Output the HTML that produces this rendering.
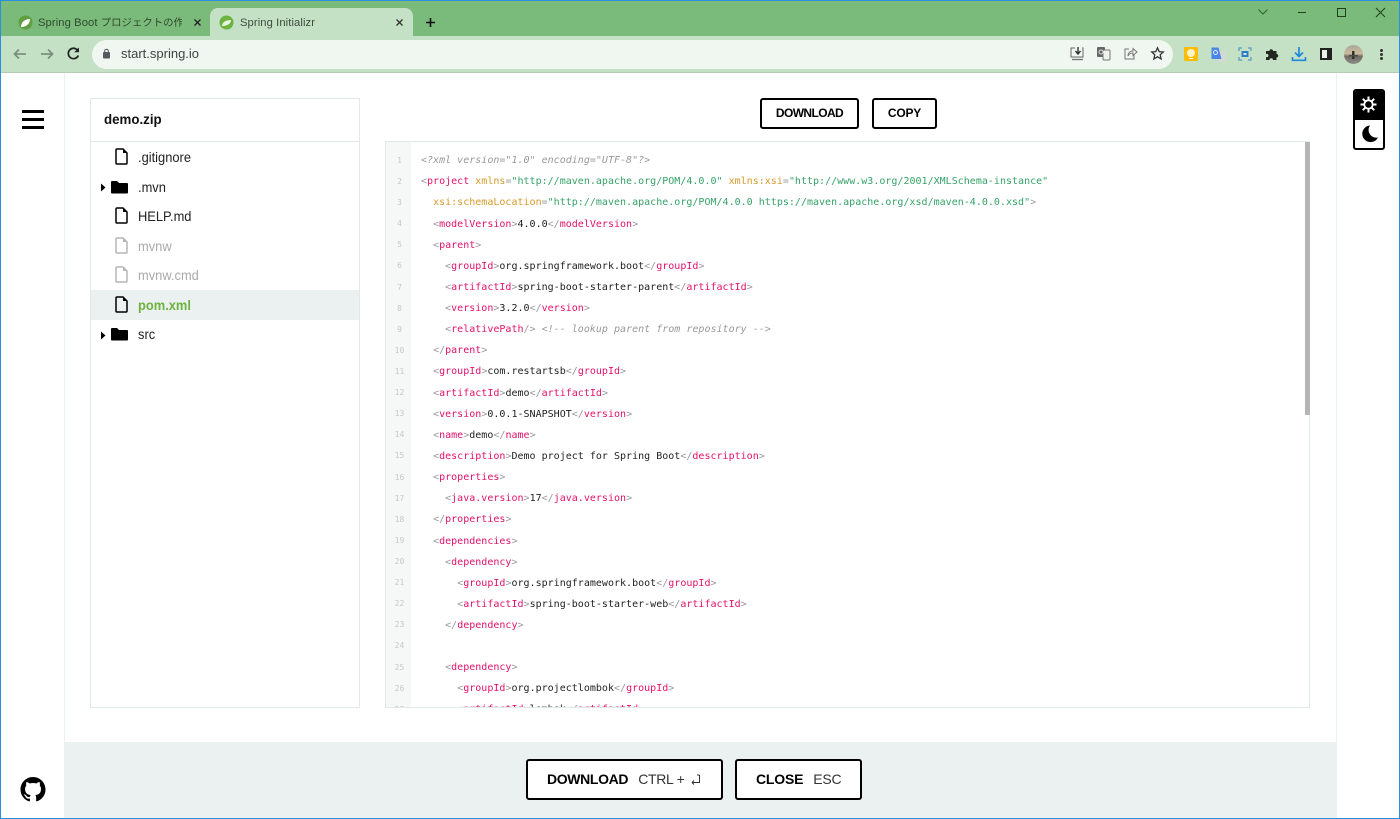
<!DOCTYPE html>
<html><head><meta charset="utf-8">
<style>
*{box-sizing:border-box}
html,body{margin:0;padding:0;width:1400px;height:819px;overflow:hidden;background:#fff;font-family:"Liberation Sans","Noto Sans CJK JP",sans-serif;color:#000}
.a{position:absolute}
#frame{position:absolute;left:0;top:0;width:1400px;height:819px;border:1px solid #2a8fdc;pointer-events:none;z-index:9}
.tt{position:absolute;font-size:12px;color:#3c4a3c;white-space:nowrap;line-height:16px}
.file{position:absolute;left:138px;font-size:14px;line-height:16px;color:#222;white-space:nowrap;transform:scaleX(.92);transform-origin:0 50%}
.btn{position:absolute;border:2px solid #000;border-radius:3px;background:#fff;font-weight:700;text-align:center;white-space:nowrap}
.ln{position:absolute;left:386px;width:25px;text-align:center;font:8px/12px "DejaVu Sans Mono",monospace;color:#c4c9c9}
.c{position:absolute;left:420px;margin-top:1px;font:10px/14px "DejaVu Sans Mono",monospace;color:#222;white-space:pre;letter-spacing:.01px}
.t{color:#e3116c}.p{color:#999}.an{color:#d49a2a}.v{color:#36a269}.cm{color:#999;font-style:italic}
</style></head><body>
<div id="frame"></div>

<!-- browser chrome -->
<div class="a" style="left:0;top:0;width:1400px;height:36px;background:#7aba7a"></div>
<div class="a" style="left:0;top:36px;width:1400px;height:37px;background:#c5e1c5;border-bottom:1px solid #b5ccb5"></div>
<div class="a" style="left:210px;top:8px;width:203px;height:29px;background:#c5e1c5;border-radius:8px 8px 0 0"></div>
<svg class="a" style="left:18px;top:15px" width="15" height="15" viewBox="0 0 15 15"><circle cx="7.5" cy="7.5" r="7" fill="#5f9f3f"/><path d="M3 12C3 7 7 4 12 4C12 9 8 12 3 12Z" fill="#fff"/></svg>
<svg class="a" style="left:219px;top:15px" width="15" height="15" viewBox="0 0 15 15"><circle cx="7.5" cy="7.5" r="7" fill="#6db33f"/><path d="M3 11C3 7 7 5 12 5C12 9 8 11 3 11Z" fill="#e8f3e0"/></svg>
<div class="tt" style="left:38px;top:15px;width:144px;overflow:hidden;font-size:11.2px;letter-spacing:.1px;color:#2f4a2f">Spring Boot <span style="font-size:10.4px;letter-spacing:0">プロジェクトの作成</span></div>
<div class="tt" style="left:240px;top:15px;font-size:11.2px;letter-spacing:.1px">Spring Initializr</div>
<svg class="a" style="left:193px;top:18px" width="9" height="9" viewBox="0 0 9 9"><path d="M1.5 1.5L7.5 7.5M7.5 1.5L1.5 7.5" stroke="#222" stroke-width="1.3"/></svg>
<svg class="a" style="left:395px;top:18px" width="9" height="9" viewBox="0 0 9 9"><path d="M1.5 1.5L7.5 7.5M7.5 1.5L1.5 7.5" stroke="#333" stroke-width="1.3"/></svg>
<svg class="a" style="left:425px;top:17px" width="11" height="11" viewBox="0 0 11 11"><path d="M5.5 1V10M1 5.5H10" stroke="#111" stroke-width="1.6"/></svg>

<svg class="a" style="left:1257px;top:7px" width="12" height="10" viewBox="0 0 12 10"><path d="M1.5 2.5L6 7L10.5 2.5" stroke="#2f5f2f" fill="none"/></svg>
<div class="a" style="left:1298px;top:12px;width:8px;height:1px;background:#1f3f1f"></div>
<div class="a" style="left:1337px;top:8px;width:9px;height:9px;border:1px solid #1f3f1f"></div>
<svg class="a" style="left:1375px;top:7px" width="11" height="11" viewBox="0 0 11 11"><path d="M1 1L10 10M10 1L1 10" stroke="#1f3f1f"/></svg>

<svg class="a" style="left:12px;top:46px" width="16" height="16" viewBox="0 0 16 16"><path d="M14 8H2.5M7 3.5L2.5 8L7 12.5" stroke="#7d8d7d" stroke-width="1.7" fill="none"/></svg>
<svg class="a" style="left:39px;top:46px" width="16" height="16" viewBox="0 0 16 16"><path d="M2 8H13.5M9 3.5L13.5 8L9 12.5" stroke="#7d8d7d" stroke-width="1.7" fill="none"/></svg>
<svg class="a" style="left:66px;top:46px" width="15" height="15" viewBox="0 0 15 15"><path d="M12.3 9.5A5.2 5.2 0 1 1 11.3 3.9" stroke="#222" stroke-width="1.7" fill="none"/><path d="M13 1.5V6.3H8.2Z" fill="#222"/></svg>

<div class="a" style="left:92px;top:40px;width:1081px;height:29px;border-radius:15px;background:#f0f6f0"></div>
<svg class="a" style="left:102px;top:48px" width="9" height="11" viewBox="0 0 9 11"><rect x="1" y="4" width="7" height="6.5" rx="1" fill="#555a60"/><path d="M2.7 4.5V3A1.8 1.8 0 0 1 6.3 3V4.5" stroke="#555a60" fill="none"/></svg>
<div class="a" style="left:121px;top:46px;font-size:13px;line-height:16px;color:#3d443f">start.spring.io</div>

<svg class="a" style="left:1069px;top:46px" width="16" height="16" viewBox="0 0 16 16"><path d="M6 2H2V11H14V2H13" stroke="#666" stroke-width="1" fill="none"/><path d="M9 1V7M6.5 5L9 8L11.5 5" stroke="#333" stroke-width="1.4" fill="none"/><path d="M3 13.5H14" stroke="#777" stroke-width="1.4"/></svg>
<svg class="a" style="left:1096px;top:46px" width="15" height="15" viewBox="0 0 15 15"><rect x="1" y="1" width="8" height="10" rx="1" fill="#666"/><rect x="7" y="4" width="7" height="10" rx="1" fill="#eef3ee" stroke="#777"/><circle cx="5" cy="6" r="2" fill="none" stroke="#ddd"/></svg>
<svg class="a" style="left:1123px;top:46px" width="15" height="15" viewBox="0 0 15 15"><path d="M6 3H2V13H11V9" stroke="#777" fill="none"/><path d="M5 10C5 6 8 5 10 5V2.5L14 6L10 9.5V7C8 7 6 8 5 10Z" stroke="#777" fill="none"/></svg>
<svg class="a" style="left:1150px;top:46px" width="15" height="15" viewBox="0 0 15 15"><path d="M7.5 1.8L9.2 5.6L13.3 6L10.2 8.8L11.1 12.9L7.5 10.8L3.9 12.9L4.8 8.8L1.7 6L5.8 5.6Z" fill="none" stroke="#333" stroke-width="1.3"/></svg>

<div class="a" style="left:1184px;top:47px;width:14px;height:14px;background:#fbbc04;border-radius:1px"></div>
<div class="a" style="left:1187px;top:49px;width:8px;height:8px;background:#fff3c8;border-radius:50%"></div>
<div class="a" style="left:1189px;top:58px;width:4px;height:1px;background:#fff"></div>
<svg class="a" style="left:1210px;top:46px" width="16" height="16" viewBox="0 0 16 16"><rect x="6" y="5" width="9.5" height="11" fill="#d5d8d5"/><path d="M1.5 1.5H8.5L11.5 13H1.5Z" fill="#4a86e8"/><circle cx="5.5" cy="6.5" r="2" fill="none" stroke="#dfe9fb"/></svg>
<svg class="a" style="left:1238px;top:47px" width="14" height="14" viewBox="0 0 14 14"><path d="M1 4V1H4M10 1H13V4M13 10V13H10M4 13H1V10" stroke="#5a9bc4" stroke-width="1.3" fill="none"/><rect x="3.5" y="4" width="7" height="6" fill="#2f7fc0"/><rect x="5.5" y="6" width="3" height="2" fill="#cfe5f5"/></svg>
<svg class="a" style="left:1265px;top:47px" width="14" height="14" viewBox="0 0 14 14"><path d="M1 4H4.5A1.7 1.7 0 1 1 8 4H11.5V7A1.7 1.7 0 1 1 11.5 10.5V13H8A1.7 1.7 0 1 0 4.5 13H1V10A1.7 1.7 0 1 0 1 7Z" fill="#202820"/></svg>
<svg class="a" style="left:1291px;top:46px" width="16" height="16" viewBox="0 0 16 16"><path d="M8 1V10M4 6.5L8 10.5L12 6.5" stroke="#1f88dd" stroke-width="1.7" fill="none"/><path d="M1.5 11V14.3H14.5V11" stroke="#1f88dd" stroke-width="1.7" fill="none"/></svg>
<div class="a" style="left:1320px;top:48px;width:12px;height:12px;border:2px solid #222;border-right-width:5px;background:#e8f3e8"></div>
<svg class="a" style="left:1344px;top:45px" width="19" height="19" viewBox="0 0 19 19"><defs><linearGradient id="av" x1="0" y1="0" x2="0" y2="1"><stop offset="0" stop-color="#a8a69e"/><stop offset=".45" stop-color="#cdbb9c"/><stop offset=".6" stop-color="#6f6c66"/><stop offset="1" stop-color="#8f8d88"/></linearGradient></defs><circle cx="9.5" cy="9.5" r="9.5" fill="url(#av)"/><path d="M8 6H10.5V14H8Z" fill="#33302c"/><path d="M5 10H14V11.5H5Z" fill="#4f4c48"/></svg>
<div class="a" style="left:1380px;top:49px;width:3px;height:3px;background:#333;border-radius:50%"></div>
<div class="a" style="left:1380px;top:53px;width:3px;height:3px;background:#333;border-radius:50%"></div>
<div class="a" style="left:1380px;top:57px;width:3px;height:3px;background:#333;border-radius:50%"></div>

<!-- side bars -->
<div class="a" style="left:64px;top:73px;width:1px;height:746px;background:#ebf0f0"></div>
<div class="a" style="left:1336px;top:73px;width:1px;height:746px;background:#ebf0f0"></div>
<div class="a" style="left:22px;top:110px;width:22px;height:2.5px;background:#000"></div>
<div class="a" style="left:22px;top:118px;width:22px;height:2.5px;background:#000"></div>
<div class="a" style="left:22px;top:126px;width:22px;height:2.5px;background:#000"></div>
<svg class="a" style="left:20px;top:777px" width="26" height="25" viewBox="0 0 16 16"><path fill="#000" d="M8 0C3.58 0 0 3.58 0 8c0 3.54 2.29 6.53 5.47 7.59.4.07.55-.17.55-.38 0-.19-.01-.82-.01-1.49-2.01.37-2.53-.49-2.69-.94-.09-.23-.48-.94-.82-1.13-.28-.15-.68-.52-.01-.53.63-.01 1.08.58 1.23.82.72 1.21 1.87.87 2.33.66.07-.52.28-.87.51-1.07-1.78-.2-3.64-.89-3.64-3.95 0-.87.31-1.59.82-2.15-.08-.2-.36-1.02.08-2.12 0 0 .67-.21 2.2.82.64-.18 1.32-.27 2-.27s1.36.09 2 .27c1.53-1.04 2.2-.82 2.2-.82.44 1.1.16 1.92.08 2.12.51.56.82 1.27.82 2.15 0 3.07-1.87 3.75-3.65 3.95.29.25.54.73.54 1.48 0 1.07-.01 1.93-.01 2.2 0 .21.15.46.55.38A8.01 8.01 0 0 0 16 8c0-4.42-3.58-8-8-8z"/></svg>

<!-- theme switch -->
<div class="a" style="left:1353px;top:89px;width:32px;height:61px;border:2px solid #000;border-radius:3px;background:#fff;overflow:hidden"><div style="height:29px;background:#000"></div></div>
<svg class="a" style="left:1360px;top:96px" width="17" height="17" viewBox="0 0 17 17"><g stroke="#fff" stroke-width="2"><path d="M8.5 0.5V4M8.5 13V16.5M0.5 8.5H4M13 8.5H16.5M2.8 2.8L5.3 5.3M11.7 11.7L14.2 14.2M14.2 2.8L11.7 5.3M5.3 11.7L2.8 14.2"/></g><circle cx="8.5" cy="8.5" r="4.2" fill="none" stroke="#fff" stroke-width="1.8"/></svg>
<svg class="a" style="left:1361px;top:124px" width="18" height="19" viewBox="0 0 18 19"><path d="M9 1.5A8.3 8.3 0 1 0 17 13.5A7.7 7.7 0 0 1 9 1.5Z" fill="#000"/></svg>

<!-- file tree -->
<div class="a" style="left:90px;top:98px;width:270px;height:610px;border:1px solid #e0e8e8"></div>
<div class="a" style="left:91px;top:141px;width:268px;height:1px;background:#e0e8e8"></div>
<div class="a" style="left:104px;top:111px;font-size:14px;line-height:16px;font-weight:700;color:#111;transform:scaleX(.95);transform-origin:0 50%">demo.zip</div>
<div class="a" style="left:91px;top:290px;width:268px;height:30px;background:#ebf0f0"></div>

<svg class="a" style="left:115px;top:148px" width="13" height="17" viewBox="0 0 13 17"><path d="M1 2A1 1 0 0 1 2 1H8L12 5V15A1 1 0 0 1 11 16H2A1 1 0 0 1 1 15Z" fill="none" stroke="#000" stroke-width="1.5"/><path d="M8 1V5H12Z" fill="#000"/></svg>
<svg class="a" style="left:115px;top:207px" width="13" height="17" viewBox="0 0 13 17"><path d="M1 2A1 1 0 0 1 2 1H8L12 5V15A1 1 0 0 1 11 16H2A1 1 0 0 1 1 15Z" fill="none" stroke="#000" stroke-width="1.5"/><path d="M8 1V5H12Z" fill="#000"/></svg>
<svg class="a" style="left:115px;top:237px" width="13" height="17" viewBox="0 0 13 17"><path d="M1 2A1 1 0 0 1 2 1H8L12 5V15A1 1 0 0 1 11 16H2A1 1 0 0 1 1 15Z" fill="none" stroke="#b5b5b5" stroke-width="1.5"/><path d="M8 1V5H12Z" fill="#b5b5b5"/></svg>
<svg class="a" style="left:115px;top:266px" width="13" height="17" viewBox="0 0 13 17"><path d="M1 2A1 1 0 0 1 2 1H8L12 5V15A1 1 0 0 1 11 16H2A1 1 0 0 1 1 15Z" fill="none" stroke="#b5b5b5" stroke-width="1.5"/><path d="M8 1V5H12Z" fill="#b5b5b5"/></svg>
<svg class="a" style="left:115px;top:296px" width="13" height="17" viewBox="0 0 13 17"><path d="M1 2A1 1 0 0 1 2 1H8L12 5V15A1 1 0 0 1 11 16H2A1 1 0 0 1 1 15Z" fill="none" stroke="#000" stroke-width="1.5"/><path d="M8 1V5H12Z" fill="#000"/></svg>

<svg class="a" style="left:100px;top:183px" width="6" height="9" viewBox="0 0 6 9"><path d="M1 0.5L5.5 4.5L1 8.5Z" fill="#000"/></svg>
<svg class="a" style="left:110px;top:180px" width="19" height="14" viewBox="0 0 19 14"><path d="M1 2A1 1 0 0 1 2 1H7L9 3H17A1 1 0 0 1 18 4V12.5A1 1 0 0 1 17 13.5H2A1 1 0 0 1 1 12.5Z" fill="#000"/></svg>
<svg class="a" style="left:100px;top:331px" width="6" height="9" viewBox="0 0 6 9"><path d="M1 0.5L5.5 4.5L1 8.5Z" fill="#000"/></svg>
<svg class="a" style="left:110px;top:327px" width="19" height="14" viewBox="0 0 19 14"><path d="M1 2A1 1 0 0 1 2 1H7L9 3H17A1 1 0 0 1 18 4V12.5A1 1 0 0 1 17 13.5H2A1 1 0 0 1 1 12.5Z" fill="#000"/></svg>

<div class="file" style="top:149px">.gitignore</div>
<div class="file" style="top:179px">.mvn</div>
<div class="file" style="top:208px">HELP.md</div>
<div class="file" style="top:238px;color:#aaa">mvnw</div>
<div class="file" style="top:267px;color:#aaa">mvnw.cmd</div>
<div class="file" style="top:297px;color:#6db33f;font-weight:700">pom.xml</div>
<div class="file" style="top:326px">src</div>

<!-- top buttons -->
<div class="btn" style="left:760px;top:98px;width:99px;height:31px;font-size:12px;line-height:27px;letter-spacing:-.6px">DOWNLOAD</div>
<div class="btn" style="left:872px;top:98px;width:65px;height:31px;font-size:12px;line-height:27px;letter-spacing:-.2px">COPY</div>

<!-- code -->
<div class="a" style="left:385px;top:141px;width:925px;height:567px;border:1px solid #e0e8e8;overflow:hidden;background:#fff">
  <div class="a" style="left:0;top:0;width:25px;height:567px;background:#f6f8f8"></div>
  <div style="position:absolute;left:-385px;top:-141px;width:1400px;height:819px">
<div class="ln" style="top:154px">1</div><div class="c" style="top:152px"><span class="cm">&lt;?xml version="1.0" encoding="UTF-8"?&gt;</span></div>
<div class="ln" style="top:175px">2</div><div class="c" style="top:173px"><span class="p">&lt;</span><span class="t">project</span> <span class="an">xmlns</span><span class="p">=</span><span class="v">"http://maven.apache.org/POM/4.0.0"</span> <span class="an">xmlns:xsi</span><span class="p">=</span><span class="v">"http://www.w3.org/2001/XMLSchema-instance"</span></div>
<div class="ln" style="top:196px">3</div><div class="c" style="top:194px">  <span class="an">xsi:schemaLocation</span><span class="p">=</span><span class="v">"http://maven.apache.org/POM/4.0.0 https://maven.apache.org/xsd/maven-4.0.0.xsd"</span><span class="p">&gt;</span></div>
<div class="ln" style="top:217px">4</div><div class="c" style="top:216px">  <span class="p">&lt;</span><span class="t">modelVersion</span><span class="p">&gt;</span>4.0.0<span class="p">&lt;/</span><span class="t">modelVersion</span><span class="p">&gt;</span></div>
<div class="ln" style="top:238px">5</div><div class="c" style="top:237px">  <span class="p">&lt;</span><span class="t">parent</span><span class="p">&gt;</span></div>
<div class="ln" style="top:259px">6</div><div class="c" style="top:258px">    <span class="p">&lt;</span><span class="t">groupId</span><span class="p">&gt;</span>org.springframework.boot<span class="p">&lt;/</span><span class="t">groupId</span><span class="p">&gt;</span></div>
<div class="ln" style="top:281px">7</div><div class="c" style="top:279px">    <span class="p">&lt;</span><span class="t">artifactId</span><span class="p">&gt;</span>spring-boot-starter-parent<span class="p">&lt;/</span><span class="t">artifactId</span><span class="p">&gt;</span></div>
<div class="ln" style="top:302px">8</div><div class="c" style="top:300px">    <span class="p">&lt;</span><span class="t">version</span><span class="p">&gt;</span>3.2.0<span class="p">&lt;/</span><span class="t">version</span><span class="p">&gt;</span></div>
<div class="ln" style="top:323px">9</div><div class="c" style="top:321px">    <span class="p">&lt;</span><span class="t">relativePath</span><span class="p">/&gt;</span> <span class="cm">&lt;!-- lookup parent from repository --&gt;</span></div>
<div class="ln" style="top:344px">10</div><div class="c" style="top:342px">  <span class="p">&lt;/</span><span class="t">parent</span><span class="p">&gt;</span></div>
<div class="ln" style="top:365px">11</div><div class="c" style="top:363px">  <span class="p">&lt;</span><span class="t">groupId</span><span class="p">&gt;</span>com.restartsb<span class="p">&lt;/</span><span class="t">groupId</span><span class="p">&gt;</span></div>
<div class="ln" style="top:386px">12</div><div class="c" style="top:385px">  <span class="p">&lt;</span><span class="t">artifactId</span><span class="p">&gt;</span>demo<span class="p">&lt;/</span><span class="t">artifactId</span><span class="p">&gt;</span></div>
<div class="ln" style="top:407px">13</div><div class="c" style="top:406px">  <span class="p">&lt;</span><span class="t">version</span><span class="p">&gt;</span>0.0.1-SNAPSHOT<span class="p">&lt;/</span><span class="t">version</span><span class="p">&gt;</span></div>
<div class="ln" style="top:428px">14</div><div class="c" style="top:427px">  <span class="p">&lt;</span><span class="t">name</span><span class="p">&gt;</span>demo<span class="p">&lt;/</span><span class="t">name</span><span class="p">&gt;</span></div>
<div class="ln" style="top:449px">15</div><div class="c" style="top:448px">  <span class="p">&lt;</span><span class="t">description</span><span class="p">&gt;</span>Demo project for Spring Boot<span class="p">&lt;/</span><span class="t">description</span><span class="p">&gt;</span></div>
<div class="ln" style="top:471px">16</div><div class="c" style="top:469px">  <span class="p">&lt;</span><span class="t">properties</span><span class="p">&gt;</span></div>
<div class="ln" style="top:492px">17</div><div class="c" style="top:490px">    <span class="p">&lt;</span><span class="t">java.version</span><span class="p">&gt;</span>17<span class="p">&lt;/</span><span class="t">java.version</span><span class="p">&gt;</span></div>
<div class="ln" style="top:513px">18</div><div class="c" style="top:511px">  <span class="p">&lt;/</span><span class="t">properties</span><span class="p">&gt;</span></div>
<div class="ln" style="top:534px">19</div><div class="c" style="top:533px">  <span class="p">&lt;</span><span class="t">dependencies</span><span class="p">&gt;</span></div>
<div class="ln" style="top:555px">20</div><div class="c" style="top:554px">    <span class="p">&lt;</span><span class="t">dependency</span><span class="p">&gt;</span></div>
<div class="ln" style="top:576px">21</div><div class="c" style="top:575px">      <span class="p">&lt;</span><span class="t">groupId</span><span class="p">&gt;</span>org.springframework.boot<span class="p">&lt;/</span><span class="t">groupId</span><span class="p">&gt;</span></div>
<div class="ln" style="top:597px">22</div><div class="c" style="top:596px">      <span class="p">&lt;</span><span class="t">artifactId</span><span class="p">&gt;</span>spring-boot-starter-web<span class="p">&lt;/</span><span class="t">artifactId</span><span class="p">&gt;</span></div>
<div class="ln" style="top:618px">23</div><div class="c" style="top:617px">    <span class="p">&lt;/</span><span class="t">dependency</span><span class="p">&gt;</span></div>
<div class="ln" style="top:639px">24</div>
<div class="ln" style="top:661px">25</div><div class="c" style="top:659px">    <span class="p">&lt;</span><span class="t">dependency</span><span class="p">&gt;</span></div>
<div class="ln" style="top:682px">26</div><div class="c" style="top:680px">      <span class="p">&lt;</span><span class="t">groupId</span><span class="p">&gt;</span>org.projectlombok<span class="p">&lt;/</span><span class="t">groupId</span><span class="p">&gt;</span></div>
<div class="ln" style="top:703px">27</div><div class="c" style="top:701px">      <span class="p">&lt;</span><span class="t">artifactId</span><span class="p">&gt;</span>lombok<span class="p">&lt;/</span><span class="t">artifactId</span><span class="p">&gt;</span></div>
  </div>
</div>
<div class="a" style="left:1305px;top:142px;width:5px;height:273px;background:#b5b5b5"></div>

<!-- footer -->
<div class="a" style="left:65px;top:742px;width:1271px;height:77px;background:#ebf0f0"></div>
<div class="btn" style="left:526px;top:759px;width:197px;height:41px;font-size:14px;line-height:37px;text-align:left;padding-left:19px;letter-spacing:-.35px">DOWNLOAD<span style="font-weight:400;color:#333;margin-left:10px;letter-spacing:-.3px">CTRL +</span></div>
<svg class="a" style="left:690px;top:774px" width="11" height="11" viewBox="0 0 11 11"><path d="M9.5 1V8.5H2" fill="none" stroke="#333"/><path d="M7 1H9.5M2 8.5L4 6.5M2 8.5L4 10.5" fill="none" stroke="#333"/></svg>
<div class="btn" style="left:735px;top:759px;width:127px;height:41px;font-size:14px;line-height:37px;text-align:left;padding-left:19px;letter-spacing:-.2px">CLOSE<span style="font-weight:400;color:#333;margin-left:10px">ESC</span></div>
</body></html>
